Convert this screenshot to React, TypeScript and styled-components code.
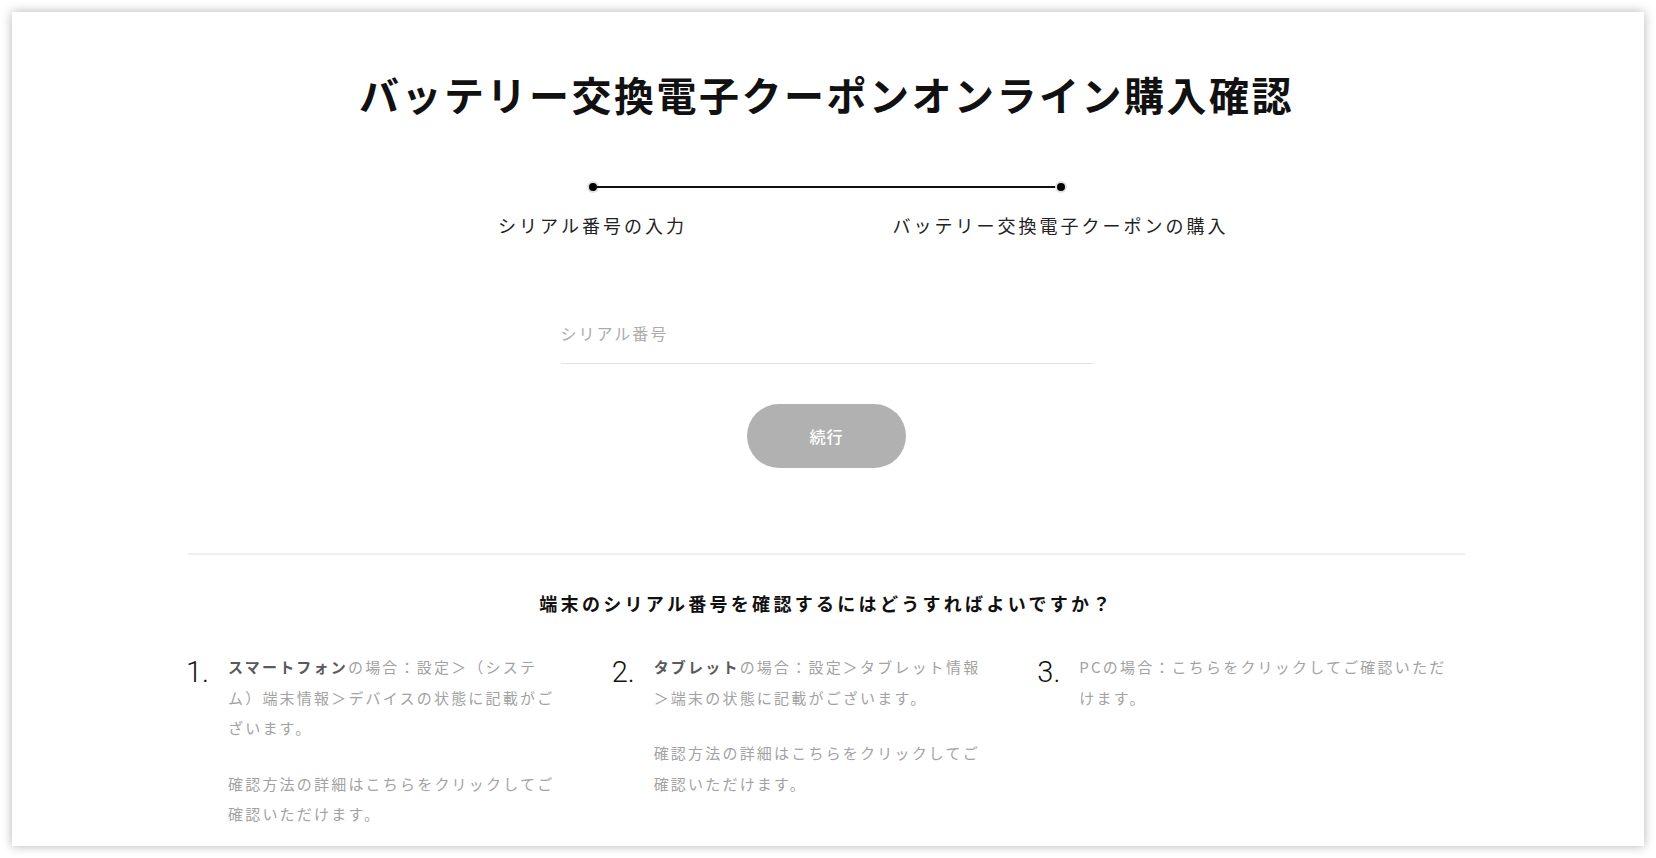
import React from 'react';
import styled, { createGlobalStyle } from 'styled-components';

const GlobalStyle = createGlobalStyle`
  html, body {
    margin: 0;
    padding: 0;
    background: #fff;
  }
  body {
    padding: 12px;
    font-family: "Noto Sans CJK JP", "Noto Sans", sans-serif;
    color: #111;
  }
  * {
    box-sizing: border-box;
  }
`;

const Card = styled.main`
  width: 1632px;
  height: 834px;
  background: #fff;
  box-shadow: 0 0 10px rgba(0, 0, 0, 0.3);
  overflow: hidden;
  padding: 54px 3px 0 0;
`;

const Inner = styled.div`
  width: 1277px;
  margin: 0 auto; // 가운데
`;

const Title = styled.h1`
  margin: 0;
  font-size: 40px;
  line-height: 56px;
  font-weight: 700;
  letter-spacing: 2.5px;
  text-align: center;
  color: #111;
`;

const Stepper = styled.div`
  width: 936px;
  margin: 61px auto 0;
`;

const Track = styled.div`
  display: flex;
  align-items: center;
  height: 8px;
  padding: 0 230px;
`;

const Dot = styled.span`
  width: 8px;
  height: 8px;
  border-radius: 50%;
  background: #000;
  box-shadow: 0 0 0 2px #e2e2e2;
  flex-shrink: 0;
`;

const Line = styled.span`
  flex: 1;
  height: 2px;
  background: #111;
`;

const StepLabels = styled.div`
  display: grid;
  grid-template-columns: 1fr 1fr;
  margin-top: 21px;
`;

const StepLabel = styled.div`
  text-align: center;
  font-size: 18px;
  line-height: 26px;
  letter-spacing: 3px;
  color: #222;
`;

const SerialInput = styled.input`
  display: block;
  width: 532px;
  height: 51px;
  margin: 75px auto 0;
  padding: 0 0 10px 0;
  border: none;
  border-bottom: 1px solid #e3e3e3;
  outline: none;
  background: transparent;
  font-family: inherit;
  font-size: 16px;
  letter-spacing: 2px;
  color: #333;
  &::placeholder {
    color: #ababab;
  }
`;

const ContinueButton = styled.button`
  display: block;
  width: 159px;
  height: 64px;
  margin: 40px auto 0;
  border: none;
  border-radius: 32px;
  background: #b1b1b1;
  color: #fff;
  font-family: inherit;
  font-size: 16px;
  font-weight: 500;
  letter-spacing: 1px;
  cursor: default;
`;

const Divider = styled.hr`
  margin: 85px 0 0;
  border: none;
  height: 2px;
  background: #efefef;
`;

const Question = styled.h2`
  margin: 34px 0 0;
  font-size: 18px;
  line-height: 28px;
  font-weight: 700;
  letter-spacing: 3.3px;
  text-align: center;
  color: #111;
`;

const Guide = styled.ol`
  list-style: none;
  margin: 35px 0 0;
  padding: 0;
  display: grid;
  grid-template-columns: repeat(3, 1fr);
`;

const GuideItem = styled.li`
  display: flex;
  align-items: flex-start;
`;

const Num = styled.span`
  width: 40px;
  flex-shrink: 0;
  font-family: Roboto, "Liberation Sans", sans-serif;
  font-weight: 300;
  font-size: 29px;
  line-height: 30px;
  margin-top: 5px;
  margin-left: -2px;
  color: #111;
`;

const Body = styled.div`
  white-space: nowrap;
  margin-left: 2px;
`;

const Para = styled.p`
  margin: 0 0 25px;
  font-size: 15px;
  line-height: 30.6px;
  letter-spacing: 2.2px;
  color: #a2a2a2;
  & b {
    font-weight: 700;
    color: #5a5a5a;
  }
`;

function App() {
  return (
    <>
      <GlobalStyle />
      <Card>
        <Inner>
          <Title>バッテリー交換電子クーポンオンライン購入確認</Title>
          <Stepper>
            <Track>
              <Dot />
              <Line />
              <Dot />
            </Track>
            <StepLabels>
              <StepLabel>シリアル番号の入力</StepLabel>
              <StepLabel>バッテリー交換電子クーポンの購入</StepLabel>
            </StepLabels>
          </Stepper>
          <SerialInput placeholder="シリアル番号" />
          <ContinueButton>続行</ContinueButton>
          <Divider />
          <Question>端末のシリアル番号を確認するにはどうすればよいですか？</Question>
          <Guide>
            <GuideItem>
              <Num>1.</Num>
              <Body>
                <Para>
                  <b>スマートフォン</b>の場合：設定＞（システ
                  <br />
                  ム）端末情報＞デバイスの状態に記載がご
                  <br />
                  ざいます。
                </Para>
                <Para>
                  確認方法の詳細はこちらをクリックしてご
                  <br />
                  確認いただけます。
                </Para>
              </Body>
            </GuideItem>
            <GuideItem>
              <Num>2.</Num>
              <Body>
                <Para>
                  <b>タブレット</b>の場合：設定＞タブレット情報
                  <br />
                  ＞端末の状態に記載がございます。
                </Para>
                <Para>
                  確認方法の詳細はこちらをクリックしてご
                  <br />
                  確認いただけます。
                </Para>
              </Body>
            </GuideItem>
            <GuideItem>
              <Num>3.</Num>
              <Body>
                <Para>
                  PCの場合：こちらをクリックしてご確認いただ
                  <br />
                  けます。
                </Para>
              </Body>
            </GuideItem>
          </Guide>
        </Inner>
      </Card>
    </>
  );
}

export default App;
